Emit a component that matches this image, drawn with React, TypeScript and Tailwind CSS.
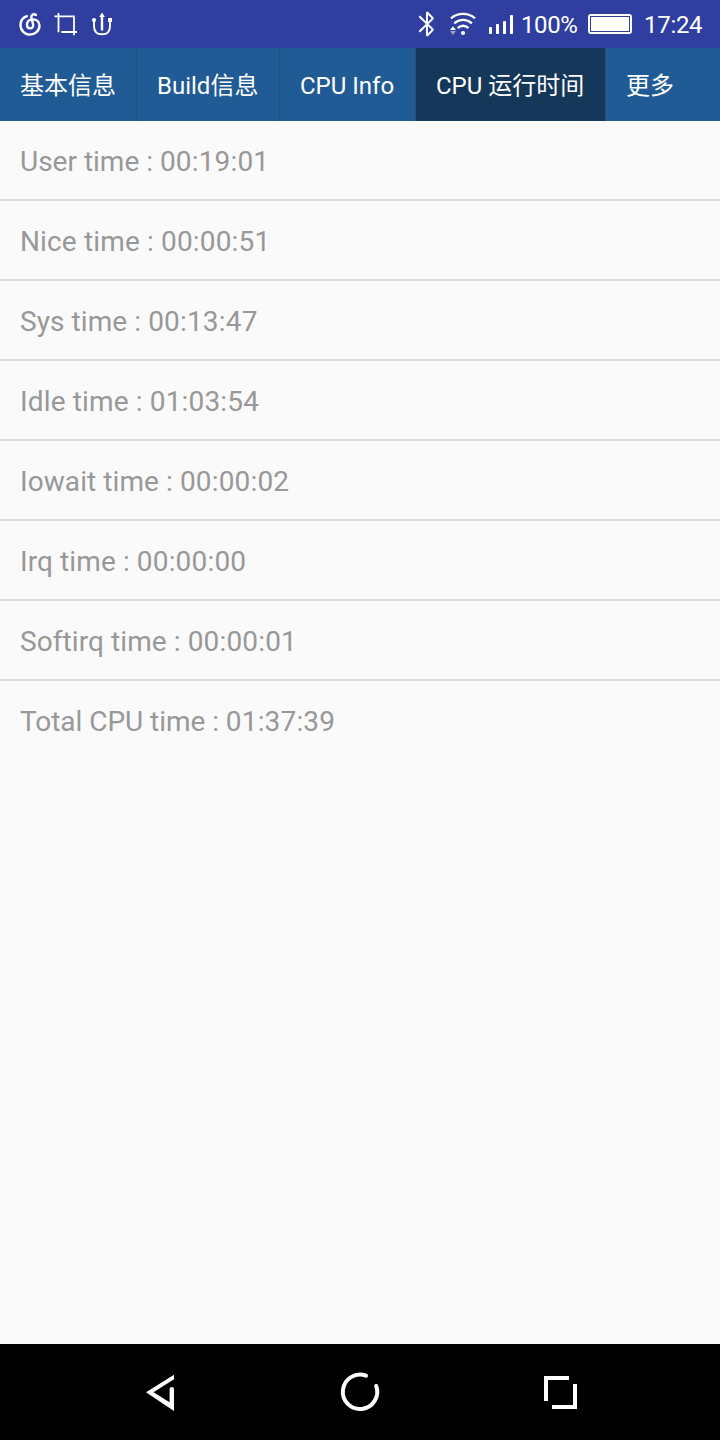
const tabs = [
  { label: "基本信息", width: "w-[137px]" },
  { label: "Build信息", width: "w-[143px]" },
  { label: "CPU Info", width: "w-[136px]" },
  { label: "CPU 运行时间", width: "w-[190px]", active: true },
];

const rows = [
  { label: "User time : ", value: "00:19:01", tracking: "tracking-[0px]" },
  { label: "Nice time : ", value: "00:00:51", tracking: "tracking-[0.14px]" },
  { label: "Sys time : ", value: "00:13:47", tracking: "tracking-[0.08px]" },
  { label: "Idle time : ", value: "01:03:54", tracking: "tracking-[0.14px]" },
  { label: "Iowait time : ", value: "00:00:02", tracking: "tracking-[0.08px]" },
  { label: "Irq time : ", value: "00:00:00", tracking: "tracking-[0.1px]" },
  { label: "Softirq time : ", value: "00:00:01", tracking: "tracking-[0.08px]" },
  { label: "Total CPU time : ", value: "01:37:39", tracking: "tracking-[-0.04px]" },
];

function StatusBar() {
  return (
    <header className="flex h-12 shrink-0 items-center bg-[#303f9f] pl-[18px] text-white">
      <svg width="24" height="48" viewBox="18 0 24 48" fill="none" stroke="currentColor" strokeLinecap="round">
        <path d="M26.8 16.2C23 17.6 20.5 21.2 20.5 25.2C20.5 30.4 24.7 34.6 30 34.6C35.3 34.6 39.5 30.6 39.5 25.6C39.5 21.6 36.4 19 32.2 19.4C29 19.8 27 21.8 27 24.8C27 26.9 28.2 28.4 30 28.4C32.2 28.4 33.6 26.6 33.1 24.4L31.4 17.6C30.9 14.9 33 13.4 35.9 14.9" strokeWidth="2.4" />
      </svg>
      <svg className="ml-3" width="24" height="48" viewBox="54 0 24 48" fill="none" stroke="currentColor" strokeWidth="1.8">
        <path d="M54.5 16.3H74V31.3M58.5 13V32.3M61.3 32H77M74 30.5V35.2" />
      </svg>
      <svg className="ml-3" width="24" height="48" viewBox="90 0 24 48" fill="none" stroke="currentColor">
        <path d="M94 21V26C94 31.5 97.2 34.3 102 34.3S110 31.5 110 26V21" strokeWidth="1.9" />
        <path d="M102 16V30.5" strokeWidth="2.4" />
        <path d="M99.2 17L102 12.6L104.8 17Z" fill="currentColor" stroke="none" />
        <path d="M108 18H112V22H108Z" fill="currentColor" stroke="none" />
        <circle cx="94" cy="20" r="2.1" fill="currentColor" stroke="none" />
      </svg>

      <svg className="ml-[302px]" width="24" height="48" viewBox="416 0 24 48" fill="none" stroke="currentColor" strokeWidth="2" strokeLinejoin="bevel">
        <path d="M419.3 16.3L433 29.6L427 35.8V12.2L433 18.4L419.3 31.7" />
      </svg>
      <svg className="ml-2" width="30" height="48" viewBox="448 0 30 48" fill="none" stroke="currentColor" strokeWidth="2.3">
        <path d="M451 18.3C458 12.5 468 12.5 475 18.3M454.2 23.3C459.6 18.7 466.5 18.7 471.9 23.3M457.7 28C461 25.2 465.2 25.2 468.5 28" />
        <circle cx="463" cy="33" r="2.1" fill="currentColor" stroke="none" />
        <path d="M450 30L453 26.2L456 30Z" fill="currentColor" stroke="none" />
        <path d="M450 31L453 35L456 31Z" fill="#989fcf" stroke="none" />
      </svg>
      <svg className="ml-[10px]" width="26" height="48" viewBox="488 0 26 48" fill="currentColor">
        <rect x="489" y="27" width="3" height="7" rx=".7" />
        <rect x="496" y="24" width="3" height="10" rx=".7" />
        <rect x="503" y="21" width="3" height="13" rx=".7" />
        <rect x="510" y="15" width="3" height="19" rx=".7" />
      </svg>
      <span className="ml-[7px] w-[56px] whitespace-nowrap pt-0.5 text-[24px] leading-7 tracking-[-0.4px]">100%</span>
      <svg className="ml-[11px]" width="44" height="48" viewBox="588 0 44 48" fill="none">
        <rect x="589" y="15" width="42" height="18" rx="2" stroke="currentColor" strokeWidth="2" />
        <rect x="591" y="17" width="38" height="14" fill="currentColor" />
        <rect x="590.5" y="16.5" width="39" height="15" stroke="#303f9f" />
      </svg>
      <span className="ml-[12px] pt-0.5 text-[24px] leading-7 tracking-[-0.3px]">17:24</span>
    </header>
  );
}

function TabBar() {
  return (
    <nav className="flex h-[73px] shrink-0 bg-[#205b95] text-[24px] text-white">
      {tabs.map((tab) => (
        <button
          key={tab.label}
          className={`${tab.width} ${tab.active ? "bg-[#14375a]" : ""} flex shrink-0 items-center whitespace-nowrap border-r border-[#2b4f70] pl-5 pt-0.5`}
        >
          {tab.label}
        </button>
      ))}
      <button className="flex items-center pl-5 pt-0.5">更多</button>
    </nav>
  );
}

function NavigationBar() {
  return (
    <footer className="flex h-24 shrink-0 items-center justify-center gap-[152px] bg-black text-white">
      <svg width="48" height="48" viewBox="136 1368 48 48" fill="currentColor">
        <path d="M174 1374.7V1379.2L153.5 1392.2L169.6 1402.3V1389Q169.6 1387 171.8 1387Q174 1387 174 1389V1411L146 1392.3Z" />
      </svg>
      <svg width="48" height="48" viewBox="336 1368 48 48" fill="none" stroke="currentColor" strokeWidth="4" strokeLinecap="round">
        <path d="M366 1375.7A17.2 17.2 0 1 0 376.2 1386" />
      </svg>
      <svg width="48" height="48" viewBox="536 1368 48 48" fill="none" stroke="currentColor" strokeWidth="4">
        <path d="M569 1378H546V1401M552 1407H575V1384" />
      </svg>
    </footer>
  );
}

export default function App() {
  return (
    <div className="flex h-[1440px] w-[720px] flex-col overflow-hidden bg-[#fafafa] font-['Roboto','Noto_Sans_CJK_SC',sans-serif]">
      <StatusBar />
      <TabBar />
      <main className="flex-1">
        <ul>
          {rows.map((row) => (
            <li
              key={row.label}
              className="flex h-20 items-center whitespace-pre border-b-2 border-[#d9d9d9] pl-5 pt-1 text-[28px] text-[#989898] last:border-transparent"
            >
              <span className={row.tracking}>{row.label}</span>
              <span className="tracking-[0.17px]">{row.value}</span>
            </li>
          ))}
        </ul>
      </main>
      <NavigationBar />
    </div>
  );
}
